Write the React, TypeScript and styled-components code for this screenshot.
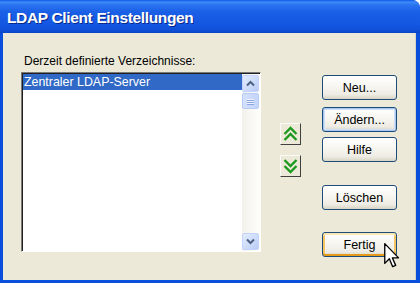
import React from "react";
import styled, { createGlobalStyle, css } from "styled-components";

const Global = createGlobalStyle`
  html, body { margin: 0; padding: 0; background: #ffffff; }
  body { font-family: "Liberation Sans", Arial, sans-serif; }
  * { box-sizing: border-box; }
`;

const Window = styled.div`
  width: 420px;
  height: 283px;
  display: flex;
  flex-direction: column;
  position: relative;
  overflow: hidden;
  border-top-right-radius: 8px;
  background: #0a4fdc;
`;

const TitleBar = styled.div`
  height: 33px;
  flex: none;
  display: flex;
  align-items: center;
  padding-left: 7px;
  padding-top: 2px;
  background: linear-gradient(
    to bottom,
    #0b58e8 0px,
    #3d8cf8 2px,
    #2a73f0 5px,
    #1a5fe6 12px,
    #1457e2 24px,
    #0f4fd8 30px,
    #0a44c4 33px
  );
`;

const Title = styled.h1`
  margin: 0;
  font-family: "Liberation Sans", Arial, sans-serif;
  font-weight: bold;
  font-size: 15.5px;
  letter-spacing: -0.35px;
  color: #ffffff;
  text-shadow: 1px 1px 0 #0a2a8a;
`;

const Body = styled.div`
  flex: 1;
  display: flex;
  background: #ece9d8;
  margin: 0 4px 3px 3px;
  box-shadow: inset -1px 0 0 #d8d4c8;
  padding: 20px 0 0 18px;
`;

const LeftColumn = styled.div`
  display: flex;
  flex-direction: column;
  width: 240px;
`;

const Label = styled.div`
  font-size: 12px;
  line-height: 16px;
  color: #000;
  padding-left: 3px;
  height: 19px;
`;

const ListBox = styled.div`
  width: 240px;
  height: 180px;
  display: flex;
  background: #ffffff;
  border-top: 1px solid #7a7a7a;
  border-left: 1px solid #7a7a7a;
  border-right: 1px solid #ffffff;
  border-bottom: 1px solid #ffffff;
  box-shadow: inset 1px 1px 0 #202020;
  padding: 1px 0 0 1px;
`;

const Items = styled.div`
  flex: 1;
  display: flex;
  flex-direction: column;
`;

const Item = styled.div<{ $selected?: boolean }>`
  height: 16px;
  font-size: 12.4px;
  line-height: 16px;
  padding-left: 1px;
  ${(p) =>
    p.$selected
      ? css`
          background: #3169c6;
          color: #ffffff;
        `
      : css`
          color: #000;
        `}
`;

const ScrollBar = styled.div`
  width: 18px;
  display: flex;
  flex-direction: column;
  background: linear-gradient(to right, #f3f1ec, #fefefb);
  padding: 1px 0 1px 0;
`;

const ScrollButton = styled.div`
  width: 17px;
  height: 17px;
  border: 1px solid #c3d3fd;
  border-radius: 2px;
  background: linear-gradient(135deg, #e2ebfe 0%, #cbdaf9 60%, #b6cbf6 100%);
  display: flex;
  align-items: center;
  justify-content: center;
`;

const Thumb = styled.div`
  width: 17px;
  height: 16px;
  margin-top: 1px;
  border: 1px solid #b6cbf6;
  border-radius: 2px;
  background: linear-gradient(to right, #d3e0fc, #c4d5fb);
  display: flex;
  flex-direction: column;
  align-items: center;
  justify-content: center;
  gap: 1px;
`;

const Grip = styled.span`
  width: 7px;
  height: 1px;
  background: #eef3fe;
  box-shadow: 0 1px 0 #8aa5e4;
`;

const Spacer = styled.div`
  flex: 1;
`;

const MiddleColumn = styled.div`
  display: flex;
  flex-direction: column;
  gap: 10px;
  margin-left: 19px;
  padding-top: 70px;
`;

const MoveButton = styled.div`
  width: 21px;
  height: 22px;
  background: #ece9d8;
  border-top: 1px solid #fafaf6;
  border-left: 1px solid #fafaf6;
  border-right: 1px solid #404040;
  border-bottom: 1px solid #404040;
  display: flex;
  align-items: center;
  justify-content: center;
`;

const RightColumn = styled.div`
  display: flex;
  flex-direction: column;
  margin-left: 21px;
  padding-top: 22px;
`;

const Button = styled.div<{ $mt: number; $state?: "focus" | "hover" }>`
  width: 75px;
  height: 25px;
  margin-top: ${(p) => p.$mt}px;
  border: 1px solid #1c4d7a;
  border-radius: 3px;
  background: linear-gradient(to bottom, #ffffff 0%, #f8f7f2 40%, #eeece4 80%, #d8d4c4 100%);
  font-size: 12.5px;
  color: #000;
  display: flex;
  align-items: center;
  justify-content: center;
  ${(p) =>
    p.$state === "focus" &&
    css`
      box-shadow: inset 0 0 0 1px #a8c6f0, inset 0 0 0 2px #cfdff7;
    `}
  ${(p) =>
    p.$state === "hover" &&
    css`
      box-shadow: inset 0 -2px 0 #e59a1a, inset 0 2px 0 #fce7b6, inset 2px 0 0 #f8c564,
        inset -2px 0 0 #f8c564;
    `}
`;

const Cursor = styled.svg`
  position: absolute;
  left: 384px;
  top: 243px;
`;

const UpIcon = () => (
  <svg width="9" height="7" viewBox="0 0 9 7">
    <path d="M1 5.5 L4.5 2 L8 5.5" fill="none" stroke="#4d6185" strokeWidth="2" />
  </svg>
);

const DownIcon = () => (
  <svg width="9" height="7" viewBox="0 0 9 7">
    <path d="M1 1.5 L4.5 5 L8 1.5" fill="none" stroke="#4d6185" strokeWidth="2" />
  </svg>
);

const DoubleUp = () => (
  <svg width="15" height="16" viewBox="0 0 15 16">
    <path d="M1.5 8 L7.5 2 L13.5 8 M1.5 14 L7.5 8 L13.5 14" fill="none" stroke="#1d9a1d" strokeWidth="2.4" />
  </svg>
);

const DoubleDown = () => (
  <svg width="15" height="16" viewBox="0 0 15 16">
    <path d="M1.5 2 L7.5 8 L13.5 2 M1.5 8 L7.5 14 L13.5 8" fill="none" stroke="#1d9a1d" strokeWidth="2.4" />
  </svg>
);

export default function App() {
  return (
    <>
      <Global />
      <Window>
        <TitleBar>
          <Title>LDAP Client Einstellungen</Title>
        </TitleBar>
        <Body>
          <LeftColumn>
            <Label>Derzeit definierte Verzeichnisse:</Label>
            <ListBox>
              <Items>
                <Item $selected>Zentraler LDAP-Server</Item>
              </Items>
              <ScrollBar>
                <ScrollButton>
                  <UpIcon />
                </ScrollButton>
                <Thumb>
                  <Grip />
                  <Grip />
                  <Grip />
                </Thumb>
                <Spacer />
                <ScrollButton>
                  <DownIcon />
                </ScrollButton>
              </ScrollBar>
            </ListBox>
          </LeftColumn>
          <MiddleColumn>
            <MoveButton>
              <DoubleUp />
            </MoveButton>
            <MoveButton>
              <DoubleDown />
            </MoveButton>
          </MiddleColumn>
          <RightColumn>
            <Button $mt={0}>Neu...</Button>
            <Button $mt={7} $state="focus">Ändern...</Button>
            <Button $mt={5}>Hilfe</Button>
            <Button $mt={23}>Löschen</Button>
            <Button $mt={22} $state="hover">Fertig</Button>
          </RightColumn>
        </Body>
        <Cursor width="16" height="25" viewBox="0 0 12 19">
          <path
            d="M0.5 0.5 L0.5 15.5 L4 12 L6.5 18 L8.8 17 L6.3 11.3 L11 11.3 Z"
            fill="#ffffff"
            stroke="#000000"
            strokeWidth="1"
            strokeLinejoin="round"
          />
        </Cursor>
      </Window>
    </>
  );
}
